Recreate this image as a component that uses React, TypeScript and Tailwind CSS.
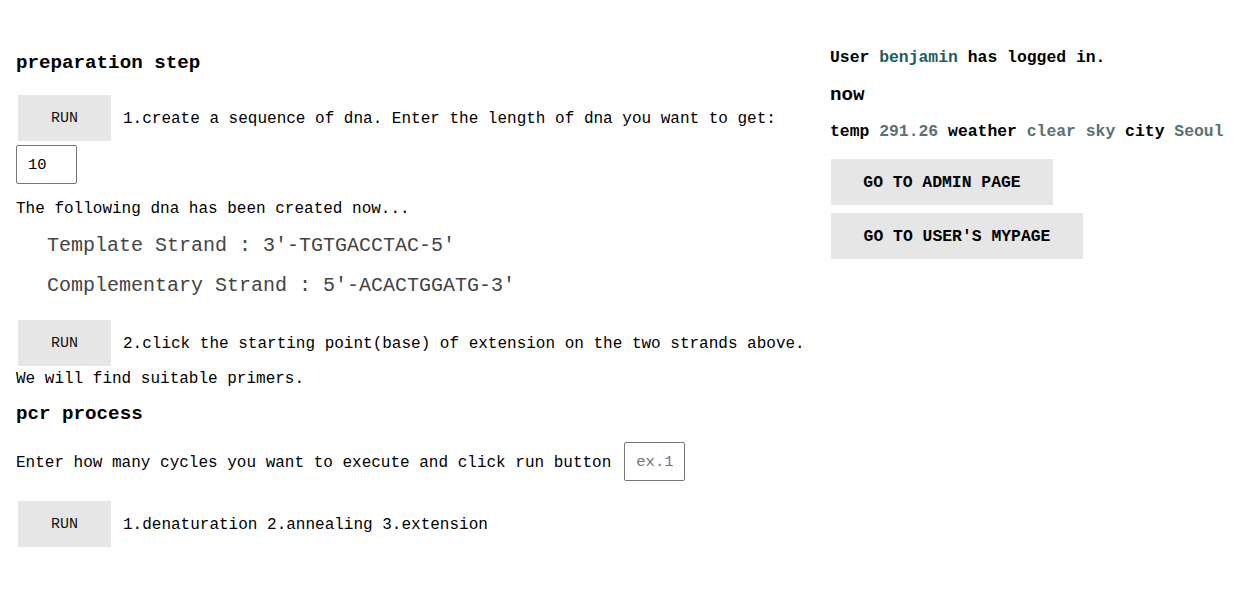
import React from "react";

const mono = { fontFamily: '"Liberation Mono", "DejaVu Sans Mono", monospace' };

function RunButton() {
  return (
    <button className="ml-[2px] w-[93px] h-[46px] shrink-0 bg-[#e6e6e6] text-[15px] text-[#111] flex items-center justify-center pt-[2px]">
      RUN
    </button>
  );
}

export default function App() {
  return (
    <div className="w-[1260px] h-[612px] bg-white text-black flex" style={mono}>
      <div className="w-[814px] pl-4 pt-[52px] shrink-0">
        <h3 className="h-[22px] leading-[22px] text-[19.2px] font-bold">preparation step</h3>
        <div className="mt-[21px] h-[46px] flex items-center gap-[12px]">
          <RunButton />
          <span className="text-[16px] pt-[2px]">1.create a sequence of dna. Enter the length of dna you want to get:</span>
        </div>
        <input
          readOnly
          value="10"
          className="mt-[4px] block w-[61px] h-[39px] border border-[#767676] rounded-[2px] px-[11px] text-[15.5px] outline-none"
          style={mono}
        />
        <p className="mt-[13px] h-[24px] leading-[24px] text-[16px]">The following dna has been created now...</p>
        <div className="pl-[31px] text-[20px] text-[#444]">
          <p className="h-[40px] leading-[40px] mt-[5px]">Template Strand : 3'-TGTGACCTAC-5'</p>
          <p className="h-[40px] leading-[40px]">Complementary Strand : 5'-ACACTGGATG-3'</p>
        </div>
        <div className="mt-[14px] h-[46px] flex items-center gap-[12px]">
          <RunButton />
          <span className="text-[16px] pt-[2px]">2.click the starting point(base) of extension on the two strands above.</span>
        </div>
        <p className="mt-[1px] h-[24px] leading-[24px] text-[16px]">We will find suitable primers.</p>
        <h3 className="mt-[12px] h-[22px] leading-[22px] text-[19.2px] font-bold">pcr process</h3>
        <div className="mt-[17px] h-[39px] flex items-center gap-[13px]">
          <span className="text-[16px] pt-[2px]">Enter how many cycles you want to execute and click run button</span>
          <input
            readOnly
            placeholder="ex.1"
            className="w-[61px] h-[39px] border border-[#767676] rounded-[2px] px-[11px] text-[15.5px] outline-none placeholder:text-[#757575]"
            style={mono}
          />
        </div>
        <div className="mt-[20px] h-[46px] flex items-center gap-[12px]">
          <RunButton />
          <span className="text-[16px] pt-[2px]">1.denaturation 2.annealing 3.extension</span>
        </div>
      </div>
      <div className="pl-[16px] pt-[46px] font-bold">
        <p className="h-[24px] leading-[24px] text-[16.4px]">
          User <span className="text-[#1b5e5a]">benjamin</span> has logged in.
        </p>
        <p className="mt-[13px] h-[24px] leading-[24px] text-[19.2px]">now</p>
        <p className="mt-[13px] h-[24px] leading-[24px] text-[16.4px] whitespace-nowrap">
          temp <span className="text-[#5b7073]">291.26</span> weather <span className="text-[#5b7073]">clear sky</span> city{" "}
          <span className="text-[#5b7073]">Seoul</span>
        </p>
        <button className="mt-[15px] ml-[1px] block w-[222px] h-[46px] bg-[#e6e6e6] text-[16.4px] font-bold pt-[2px]">
          GO TO ADMIN PAGE
        </button>
        <button className="mt-[8px] ml-[1px] block w-[252px] h-[46px] bg-[#e6e6e6] text-[16.4px] font-bold pt-[2px]">
          GO TO USER'S MYPAGE
        </button>
      </div>
    </div>
  );
}
